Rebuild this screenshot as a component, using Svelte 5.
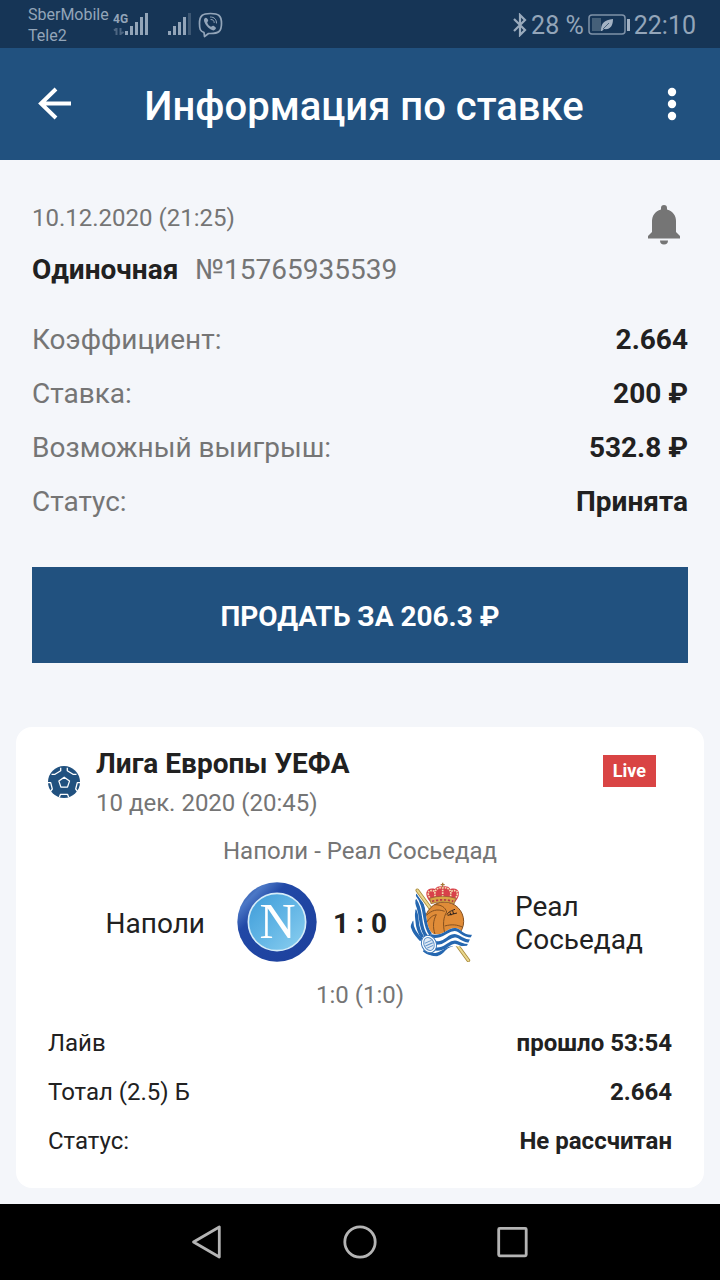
<script>
    let title = "Информация по ставке";

    let bet = {
        date: "10.12.2020 (21:25)",
        type: "Одиночная",
        number: "№15765935539",
        cashout: "206.3 ₽"
    };

    let details = [
        { label: "Коэффициент:", value: "2.664" },
        { label: "Ставка:", value: "200 ₽" },
        { label: "Возможный выигрыш:", value: "532.8 ₽" },
        { label: "Статус:", value: "Принята" }
    ];

    let event = {
        league: "Лига Европы УЕФА",
        date: "10 дек. 2020 (20:45)",
        home: "Наполи",
        away: "Реал Сосьедад",
        score: "1 : 0",
        periods: "1:0 (1:0)"
    };

    let outcome = [
        { label: "Лайв", value: "прошло 53:54" },
        { label: "Тотал (2.5) Б", value: "2.664" },
        { label: "Статус:", value: "Не рассчитан" }
    ];
</script>

<style>
    :global(body) {
        margin: 0;
        background: #f4f6fa;
    }

    .app {
        display: flex;
        flex-direction: column;
        min-height: 100vh;
        font-family: Roboto, "Liberation Sans", sans-serif;
        color: #212121;
        background: #f4f6fa;
    }

    svg {
        display: block;
        flex: none;
    }

    button {
        margin: 0;
        padding: 0;
        border: 0;
        background: none;
        font-family: inherit;
        color: inherit;
        cursor: pointer;
    }

    /* system status bar */
    .status {
        display: flex;
        justify-content: space-between;
        align-items: center;
        box-sizing: border-box;
        height: 48px;
        padding: 2px 24px 0 28px;
        background: #163556;
        color: #93a5b9;
    }

    .status div {
        display: flex;
        align-items: center;
    }

    .carriers {
        margin: 0 4px 0 0;
        font-size: 16px;
        line-height: 21px;
    }

    .carriers span {
        display: block;
    }

    .power {
        gap: 4px;
        font-size: 25px;
    }

    .net {
        font-family: "Liberation Sans Narrow", Roboto, sans-serif;
        font-size: 12px;
        font-weight: 700;
    }

    .top {
        display: flex;
        align-items: center;
        height: 112px;
        padding: 0 32px;
        background: #21517f;
        color: #fff;
    }

    .top h1 {
        flex: 1;
        margin: 0;
        padding-top: 6px;
        font-size: 40px;
        line-height: 48px;
        font-weight: 500;
        text-align: center;
    }

    .bet {
        padding: 44px 32px 0;
    }

    .summary {
        display: flex;
        justify-content: space-between;
        align-items: flex-start;
        margin-bottom: 37px;
        color: #757575;
    }

    .summary p {
        margin: 0;
    }

    .date {
        font-size: 24px;
        line-height: 28px;
    }

    .summary .number {
        margin-top: 22px;
        font-size: 28px;
        line-height: 32px;
    }

    .number b {
        margin-right: 10px;
        font-weight: 700;
        color: #212121;
    }

    dl {
        display: flex;
        flex-direction: column;
        margin: 0;
    }

    dl div {
        display: flex;
        justify-content: space-between;
    }

    dt,
    dd {
        margin: 0;
    }

    dd {
        font-weight: 700;
    }

    .details {
        gap: 20px;
        font-size: 28px;
        line-height: 34px;
    }

    .details dt {
        color: #757575;
    }

    .sell {
        width: 100%;
        height: 96px;
        margin-top: 48px;
        padding-top: 2px;
        background: #21517f;
        font-size: 28px;
        font-weight: 700;
        color: #fff;
    }

    .card {
        margin: 64px 16px 16px;
        padding: 20px 32px 33px;
        border-radius: 16px;
        background: #fff;
    }

    .league {
        display: flex;
        align-items: center;
        gap: 16px;
    }

    .league div {
        flex: 1;
    }

    .league h2 {
        margin: 0 0 8px;
        font-size: 28px;
        line-height: 34px;
        font-weight: 700;
    }

    .league p {
        margin: 0;
        color: #757575;
    }

    .live {
        align-self: flex-start;
        margin: 8px 16px 0 0;
        padding: 0 10px;
        background: #d94444;
        font-size: 18px;
        line-height: 32px;
        font-weight: 700;
        color: #fff;
    }

    .muted {
        margin: 0;
        font-size: 24px;
        line-height: 28px;
        text-align: center;
        color: #757575;
    }

    .match {
        margin-top: 20px;
    }

    .teams {
        display: flex;
        align-items: center;
        gap: 16px;
        margin: 17px 0 19px;
        font-size: 28px;
        line-height: 33px;
    }

    .teams span {
        flex: 1 1 0;
        box-sizing: border-box;
        padding: 2px 0 0 16px;
    }

    .teams .home {
        padding: 2px 16px 0 0;
        text-align: right;
    }

    .teams b {
        padding-top: 2px;
        font-weight: 700;
        white-space: nowrap;
    }

    .letter {
        font-family: "Liberation Serif", serif;
        font-size: 150px;
    }

    .outcome {
        gap: 21px;
        margin-top: 20px;
        font-size: 24px;
        line-height: 28px;
    }

    .nav {
        display: flex;
        justify-content: center;
        align-items: center;
        gap: 116px;
        height: 76px;
        margin-top: auto;
        background: #000;
    }
</style>

<div class="app">
    <div class="status">
        <div>
            <p class="carriers"><span>SberMobile</span><span>Tele2</span></p>
            <svg width="110" height="30" viewBox="0 2 110 30" fill="#93a5b9">
                <text class="net" x="0" y="15">4G</text>
                <path d="M3.500 27v-7M1 22.500l2.500-2M7.500 20v7M7.500 26l3-2" fill="none" stroke="#4d6682" stroke-width="2" />
                <path d="M12 23h3v4h-3zM17 18h3v9h-3zM22 14h3v13h-3zM27 9h3v18h-3zM32 5h3v22h-3z" />
                <path d="M55 23h3v4h-3zM60 18h3v9h-3zM65 14h3v13h-3zM70 9h3v18h-3z" />
                <path d="M75 5h3v22h-3z" fill="#3d5773" />
                <!-- viber -->
                <g fill="none" stroke="#93a5b9" stroke-linecap="round" stroke-linejoin="round">
                    <path d="M91 24.500C87 23 86.500 21 86.500 15.500c0-8 3-10 11-10s11 2 11 10-3 10-11 10h-2l-4 3z" stroke-width="1.700" />
                    <path d="M97.500 9c4 0 6 2.500 6 6M98 11.500c2 0 3 1 3.200 3" stroke-width="1" />
                </g>
                <path d="M91.500 10.500c1-1.500 2.500-1 3.500 1.300.8 1.700-1 2-.7 3 .5 2 2 3.300 3.600 3.900 1 .3 1.300-1.600 3-.6 2.200 1.400 2.500 2 1.500 3.200-1.300 1.700-2.900 1.200-5-.1-3-1.900-4.700-4-6-7.200-.5-1.400-.6-2.500.1-3.500z" />
            </svg>
        </div>
        <div class="power">
            <svg width="14" height="24" viewBox="0 0 14 24" fill="none" stroke="#9aabbd" stroke-width="2.200">
                <path d="M1 6l11 11-5 5V2l5 5L1 18" />
            </svg>
            <span>28 %</span>
            <svg width="42" height="22" viewBox="0 0 42 22">
                <rect x="1" y="1" width="36" height="19" rx="3" fill="none" stroke="#7f92a8" stroke-width="1.500" />
                <path d="M4 4h9v13H4z" fill="#456079" />
                <path d="M39 5h3v12h-3z" fill="#a3b2c3" />
                <path d="M13 17c0-8 3-11 12-12 0 7-3 11-9 10l-2 2z" fill="#a3b2c3" />
                <path d="M15 15l6-6" stroke="#456079" />
            </svg>
            <span>22:10</span>
        </div>
    </div>

    <header class="top">
        <button aria-label="Назад">
            <svg width="40" height="40" viewBox="0 0 40 40" fill="none" stroke="#fff" stroke-width="4">
                <path d="M39 19.500H9M24 5 9 19.500 24 34" />
            </svg>
        </button>
        <h1>{title}</h1>
        <button aria-label="Меню">
            <svg width="32" height="36" viewBox="0 0 32 36" fill="#fff">
                <circle cx="16" cy="6" r="4.200" /><circle cx="16" cy="18" r="4.200" /><circle cx="16" cy="30" r="4.200" />
            </svg>
        </button>
    </header>

    <main>
        <section class="bet">
            <div class="summary">
                <div>
                    <p class="date">{bet.date}</p>
                    <p class="number"><b>{bet.type}</b> {bet.number}</p>
                </div>
                <button aria-label="Уведомления">
                    <svg width="48" height="42" viewBox="0 0 48 42" fill="#757575">
                        <path d="M24 1a3 3 0 0 1 3 3v1.500c6 1.500 9 6.500 9 11.500v11l4 4v2.500H8V32l4-4V17c0-5 3-10 9-11.500V4a3 3 0 0 1 3-3zM20 36.500h8a4 4 0 0 1-8 0z" />
                    </svg>
                </button>
            </div>

            <dl class="details">
                {#each details as row}
                <div><dt>{row.label}</dt><dd>{row.value}</dd></div>
                {/each}
            </dl>

            <button class="sell">ПРОДАТЬ ЗА {bet.cashout}</button>
        </section>

        <section class="card">
            <div class="league">
                <svg width="32" height="32" viewBox="0 0 32 32">
                    <circle cx="16" cy="16" r="16" fill="#21517f" />
                    <path fill="none" stroke="#fff" stroke-width="1.300" stroke-linejoin="round" d="M16.200 11.200l5.300 3.900-2 6h-6.600l-2-6zM3.500 8.300H7l5.700-3.600v-3M28.500 8.300H25l-5.700-3.600v-3M0 16.700h2.700L4.300 23 2 26M32 16.700h-2.700L27.700 23l2.300 3M11.300 31.300l1.200-3h7l1.200 3" />
                </svg>
                <div>
                    <h2>{event.league}</h2>
                    <p class="date">{event.date}</p>
                </div>
                <span class="live">Live</span>
            </div>

            <p class="muted match">{event.home} - {event.away}</p>

            <div class="teams">
                <span class="home">{event.home}</span>
                <svg width="80" height="80" viewBox="21 21 240 240">
                    <defs>
                        <linearGradient id="rim" x1="0" y1="0" x2="1" y2="1">
                            <stop offset="0" stop-color="#16388f" />
                            <stop offset="0.180" stop-color="#4c78c6" />
                            <stop offset="0.320" stop-color="#2148a6" />
                            <stop offset="1" stop-color="#1d409c" />
                        </linearGradient>
                        <linearGradient id="sky" x1="0" y1="0" x2="1" y2="1">
                            <stop offset="0" stop-color="#3d9bd8" />
                            <stop offset="0.500" stop-color="#62b5e5" />
                            <stop offset="1" stop-color="#8dd0f0" />
                        </linearGradient>
                    </defs>
                    <circle cx="141" cy="141" r="119" fill="url(#rim)" />
                    <circle cx="141" cy="141" r="86" fill="url(#sky)" stroke="#d5ecf8" stroke-width="5" />
                    <text class="letter" x="143" y="190" text-anchor="middle" fill="#fff">N</text>
                </svg>
                <b>{event.score}</b>
                <svg width="80" height="80" viewBox="9 21 240 240">
                    <defs>
                        <clipPath id="flag">
                            <path d="M49 55c8 13 14 21 23 32 8 19 5 48 14 71 5 13 12 20 23 20 24 0 38-22 58-19 20 3 18 21 49 20l-15 33c-28 4-45-2-57 8-13 10-21 26-39 24-24-3-39-12-50-33-9-20-29-22-24-56 3-10 10-20 13-32 5-24-1-45 5-68z" />
                        </clipPath>
                    </defs>
                    <path d="M52 46 205 256" stroke="#a98b3c" stroke-width="11" stroke-linecap="round" />
                    <path d="M52 46 205 256" stroke="#ead78d" stroke-width="6" stroke-linecap="round" />
                    <!-- ball -->
                    <circle cx="133" cy="139" r="58" fill="#e08c38" stroke="#85501f" stroke-width="3" />
                    <path d="M78 122c18-17 32-21 56-13M104 89c20 0 32 8 36 22-10 16-12 38-6 62M78 145c12-18 20-24 31-26-10 18-11 38-4 58M134 153c22-6 38-4 55 4" fill="none" stroke="#85501f" stroke-width="3" />
                    <path d="M141 119c2-6 8-10 24-16M143 121l28-7M150 112l3 9M158 108l3 9" fill="none" stroke="#2e211b" stroke-width="3" />
                    <!-- crown -->
                    <path d="M90 80C68 54 82 35 105 42c6-8 15-9 23-7 9-2 18-1 23 7 23-7 37 12 15 38z" fill="#d8414a" />
                    <path d="M94 74C76 53 86 42 104 49M163 74c18-21 8-32-10-25M108 72c-9-23 0-35 20-34M149 72c9-23 0-35-21-34M128 36v37" fill="none" stroke="#f3dfb0" stroke-width="5" stroke-dasharray="5 3" />
                    <path d="M128 23v14M122 29h12" stroke="#a9783c" stroke-width="4" />
                    <path d="M89 70q39-13 78 0l-4 16q-35-10-70 0z" fill="#d9a645" stroke="#8b5833" stroke-width="2" />
                    <path d="M96 79q32-9 64 0" fill="none" stroke="#b63942" stroke-width="5" stroke-dasharray="7 5" />
                    <!-- flag -->
                    <g clip-path="url(#flag)">
                        <path d="M20 40h210v220H20z" fill="#fff" />
                        <g fill="none" stroke="#2567b0" stroke-width="10">
                            <path d="M49 56c34 40 18 94 43 122" />
                            <path d="M45 75c25 38 8 70 33 108" />
                            <path d="M44 105c14 25-2 48 24 82" />
                            <path d="M35 137c0 24 10 38 29 58" />
                            <path d="M90 182c42 11 52-26 80-18 16 5 20 22 52 18" />
                            <path d="M95 202c42 11 50-26 74-19 18 5 24 20 52 16" />
                            <path d="M100 221c38 8 46-25 69-19 16 4 22 14 48 9" />
                            <path d="M70 227c47 32 62-10 88-8" />
                            <path d="M70 243c47 17 55 0 76-10" />
                        </g>
                    </g>
                    <g transform="rotate(-24 87 207)">
                        <ellipse cx="87" cy="207" rx="22" ry="27" fill="#fff" stroke="#3a76b7" stroke-width="3" />
                        <ellipse cx="87" cy="207" rx="15" ry="20" fill="#dfeaf6" stroke="#5e91c7" stroke-width="3" />
                        <path d="M76 200h22M75 208h24M77 216h20" stroke="#5e91c7" stroke-width="3" />
                    </g>
                </svg>
                <span>{event.away}</span>
            </div>

            <p class="muted">{event.periods}</p>

            <dl class="outcome">
                {#each outcome as row}
                <div><dt>{row.label}</dt><dd>{row.value}</dd></div>
                {/each}
            </dl>
        </section>
    </main>

    <nav class="nav">
        <button aria-label="Назад">
            <svg width="36" height="36" viewBox="0 0 36 36" fill="none" stroke="#b4b4b4" stroke-width="2.800" stroke-linejoin="round">
                <path d="M29.300 3v30L3.500 18z" />
            </svg>
        </button>
        <button aria-label="Домой">
            <svg width="36" height="36" viewBox="0 0 36 36" fill="none" stroke="#b4b4b4" stroke-width="2.800">
                <circle cx="18" cy="18" r="15.200" />
            </svg>
        </button>
        <button aria-label="Недавние">
            <svg width="36" height="36" viewBox="0 0 36 36" fill="none" stroke="#b4b4b4" stroke-width="2.800">
                <rect x="4.700" y="4.300" width="27.500" height="27.500" rx="1" />
            </svg>
        </button>
    </nav>
</div>
